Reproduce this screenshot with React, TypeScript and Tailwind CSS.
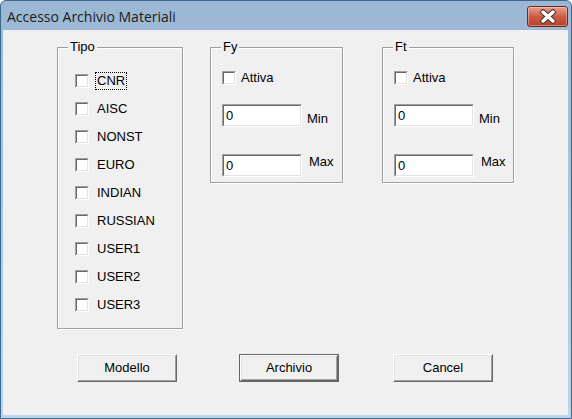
import React from 'react';

const sans = { fontFamily: '"Liberation Sans", Arial, sans-serif' };

function Check() {
  return (
    <span className="block w-[14px] h-[14px] shrink-0 border border-t-[#a0a0a0] border-l-[#a0a0a0] border-b-white border-r-white bg-white">
      <span className="block w-full h-full border border-t-[#696969] border-l-[#696969] border-b-[#e3e3e3] border-r-[#e3e3e3]" />
    </span>
  );
}

function Field() {
  return (
    <div className="w-[80px] h-[23px] shrink-0 border border-t-[#a0a0a0] border-l-[#a0a0a0] border-b-white border-r-white bg-white">
      <div className="w-full h-full border border-t-[#696969] border-l-[#696969] border-b-[#e3e3e3] border-r-[#e3e3e3] pl-[2px] text-[13px] leading-[19px] text-black">
        0
      </div>
    </div>
  );
}

function Button({ label, isDefault }: { label: string; isDefault?: boolean }) {
  const face = (
    <div className="w-full h-full border border-t-white border-l-white border-b-[#696969] border-r-[#696969]">
      <div className="w-full h-full border border-t-[#e3e3e3] border-l-[#e3e3e3] border-b-[#a0a0a0] border-r-[#a0a0a0] bg-[#f0f0f0] flex items-center justify-center text-[13px] text-black">
        {label}
      </div>
    </div>
  );
  return (
    <div className={`w-[100px] h-[28px] shrink-0 ${isDefault ? 'border border-[#646464]' : ''}`}>{face}</div>
  );
}

function Group({ title, className, children }: { title: string; className: string; children: React.ReactNode }) {
  return (
    <div className={`relative shrink-0 border border-[#a0a0a0] shadow-[inset_1px_1px_0_#fff,1px_1px_0_#fff] ${className}`}>
      <span className="absolute -top-[9px] left-[10px] px-[2px] bg-[#f0f0f0] text-[13px] leading-[16px] text-black">
        {title}
      </span>
      {children}
    </div>
  );
}

const tipi = ['CNR', 'AISC', 'NONST', 'EURO', 'INDIAN', 'RUSSIAN', 'USER1', 'USER2', 'USER3'];

function RangeGroup({ title, left }: { title: string; left: string }) {
  return (
    <Group title={title} className={`h-[136px] ${left}`}>
      <div className="flex flex-col pl-[11px]">
        <div className="flex items-center gap-[5px] mt-[22px] h-[16px]">
          <Check />
          <span className="text-[13px] text-black">Attiva</span>
        </div>
        <div className="flex items-start gap-[5px] mt-[18px]">
          <Field />
          <span className="text-[13px] text-black mt-[5px]">Min</span>
        </div>
        <div className="flex items-start gap-[7px] mt-[25px]">
          <Field />
          <span className="text-[13px] text-black -mt-[2px]">Max</span>
        </div>
      </div>
    </Group>
  );
}

export default function App() {
  return (
    <div
      className="w-[572px] h-[419px] flex flex-col bg-gradient-to-b from-[#9cb7d4] to-[#bcd4ec] border border-[#3a6a8c] rounded-t-[6px] overflow-hidden"
      style={sans}
    >
      <div className="h-[29px] shrink-0 flex items-center justify-between pl-[6px] pr-[3px]">
        <span
          className="text-[14px] text-[#1b1b1b] mt-[1px]"
          style={{ fontFamily: '"Open Sans", "Noto Sans", sans-serif' }}
        >
          Accesso Archivio Materiali
        </span>
        <div className="w-[41px] h-[21px] mt-[2px] rounded-[3px] border border-[#6d2a22] bg-gradient-to-b from-[#e5a08f] via-[#cf5a44] to-[#b9402d] shadow-[inset_0_0_0_1px_rgba(255,255,255,0.35)] flex items-center justify-center">
          <svg width="18" height="15" viewBox="0 0 18 15">
            <path d="M4 3 L14 12 M14 3 L4 12" stroke="#4a3330" strokeWidth="5.5" strokeLinecap="round" />
            <path d="M4 3 L14 12 M14 3 L4 12" stroke="#ffffff" strokeWidth="3.5" strokeLinecap="round" />
          </svg>
        </div>
      </div>
      <div className="flex-1 ml-[2px] mr-[3px] mb-[3px] bg-[#f0f0f0] flex flex-col">
        <div className="flex items-start mt-[17px]">
          <Group title="Tipo" className="ml-[54px] w-[126px] h-[282px]">
            <div className="flex flex-col pt-[19px] pl-[17px]">
              {tipi.map((t, i) => (
                <div key={t} className="h-[28px] flex items-center gap-[6px]">
                  <Check />
                  <span
                    className={`text-[13px] leading-[16px] text-black px-[1px] ${
                      i === 0 ? 'border border-dotted border-black' : 'border border-transparent'
                    }`}
                  >
                    {t}
                  </span>
                </div>
              ))}
            </div>
          </Group>
          <RangeGroup title="Fy" left="ml-[27px] w-[133px]" />
          <RangeGroup title="Ft" left="ml-[39px] w-[132px]" />
        </div>
        <div className="flex items-start mt-[25px]">
          <div className="ml-[74px]">
            <Button label="Modello" />
          </div>
          <div className="ml-[62px]">
            <Button label="Archivio" isDefault />
          </div>
          <div className="ml-[54px]">
            <Button label="Cancel" />
          </div>
        </div>
      </div>
    </div>
  );
}
